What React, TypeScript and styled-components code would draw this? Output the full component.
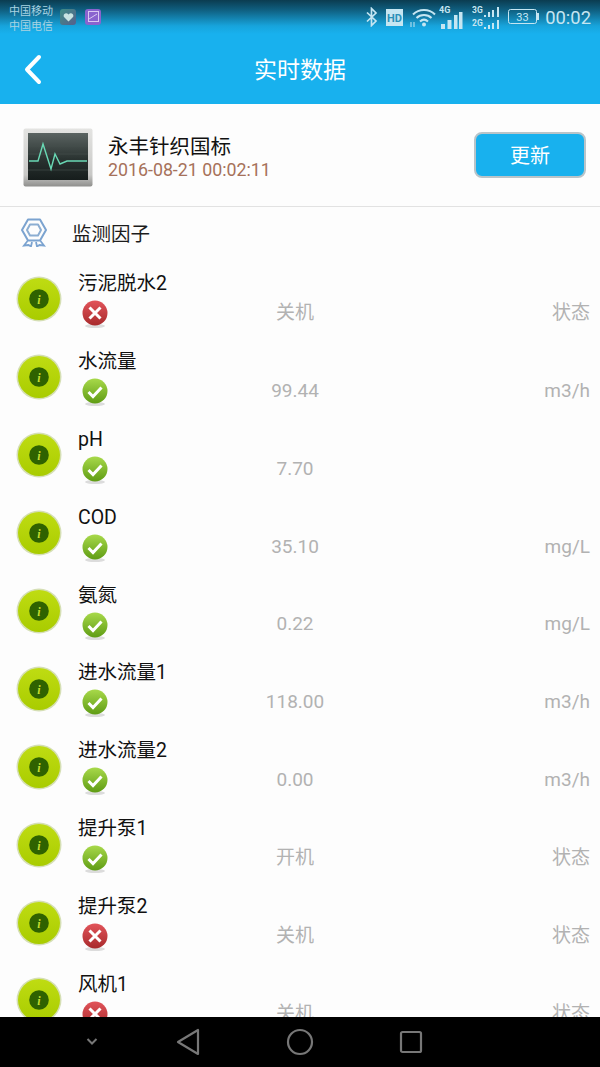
import React from "react";
import styled, { createGlobalStyle } from "styled-components";

const GlobalStyle = createGlobalStyle`
  html, body {
    margin: 0;
    padding: 0;
    background: #fdfdfd;
  }
  * { box-sizing: border-box; }
`;

const FONT = `"Roboto", "Noto Sans CJK SC", sans-serif`;

const Page = styled.div`
  width: 600px;
  height: 1067px;
  display: flex;
  flex-direction: column;
  overflow: hidden;
  background: #fdfdfd;
  font-family: ${FONT};
`;

const TopArea = styled.header`
  height: 104px;
  flex: none;
  background: linear-gradient(#0b3c50 0, #0f5f80 10px, #17a4dc 26px, #18b1ee 34px);
`;

const StatusBar = styled.div`
  height: 34px;
  display: flex;
  align-items: center;
  padding: 0 9px 0 9px;
`;

const Carriers = styled.div`
  width: 44px;
  font-size: 11px;
  line-height: 15px;
  color: #a9d3e2;
  margin-right: 7px;
  padding-top: 3px;
  white-space: nowrap;
`;

const AppBadge = styled.span<{ $bg: string }>`
  width: 16px;
  height: 16px;
  border-radius: 3px;
  background: ${(p) => p.$bg};
  margin-right: 9px;
  margin-top: -1px;
  display: flex;
  align-items: center;
  justify-content: center;
`;

const StatusIcons = styled.div`
  margin-left: auto;
  display: flex;
  align-items: center;
  color: #c6e6f2;
`;

const Clock = styled.span`
  font-size: 18.4px;
  margin-left: 6px;
  color: #c6e6f2;
`;

const NavRow = styled.div`
  height: 70px;
  display: flex;
  align-items: center;
  justify-content: center;
  position: relative;
`;

const BackBtn = styled.svg`
  position: absolute;
  left: 23px;
  top: 19px;
`;

const NavTitle = styled.div`
  font-size: 23px;
  color: #fff;
  margin-top: -3px;
`;

const StationBar = styled.section`
  height: 103px;
  flex: none;
  display: flex;
  align-items: center;
  padding: 0 14px 1px 23px;
  border-bottom: 1px solid #e2e2e2;
`;

const MonitorWrap = styled.div`
  margin-top: 7px;
  height: 60px;
`;

const StationText = styled.div`
  margin-left: 15px;
  margin-top: 3px;
  flex: 1;
`;

const StationName = styled.div`
  font-size: 20.5px;
  line-height: 26px;
  color: #111;
`;

const StationTime = styled.div`
  font-size: 17.8px;
  line-height: 19px;
  color: #a6715a;
`;

const UpdateButton = styled.button`
  width: 112px;
  height: 46px;
  border-radius: 8px;
  border: 2px solid #b9c4c9;
  background: #18b1ee;
  color: #fff;
  font-family: ${FONT};
  font-size: 20px;
  padding: 0;
`;

const SectionHead = styled.div`
  height: 54px;
  flex: none;
  display: flex;
  align-items: center;
  padding: 0 0 4px 21px;
  font-size: 19.5px;
  color: #1c1c1c;
`;

const SectionTitle = styled.span`
  margin-left: 25px;
`;

const List = styled.div`
  flex: 1;
  min-height: 0;
  overflow: hidden;
`;

const Row = styled.div`
  height: 77.9px;
  display: grid;
  grid-template-columns: 78px 142px 150px 1fr;
  align-items: end;
`;

const InfoCell = styled.div`
  align-self: center;
  padding-left: 16px;
  margin-top: -1px;
  display: flex;
`;

const NameCell = styled.div`
  align-self: stretch;
  padding-top: 9px;
`;

const Name = styled.div`
  font-size: 19.5px;
  line-height: 27px;
  color: #111;
`;

const StateIcon = styled.div`
  margin: 3px 0 0 3px;
  height: 28px;
`;

const Value = styled.div`
  text-align: center;
  font-size: 19px;
  line-height: 24px;
  color: #b2b2b2;
  padding-bottom: 14px;
`;

const Unit = styled.div`
  text-align: right;
  font-size: 19px;
  line-height: 24px;
  color: #b2b2b2;
  padding: 0 10px 14px 0;
`;

const BottomNav = styled.nav`
  height: 50px;
  flex: none;
  background: #000;
  display: grid;
  grid-template-columns: 96px 112px 111px 28px;
  align-items: center;
  padding-left: 78px;
`;

const NavKey = styled.div`
  width: 28px;
  display: flex;
  justify-content: center;
`;

const InfoBadge = () => (
  <svg width="46" height="46" viewBox="0 0 46 46">
    <defs>
      <linearGradient id="infoG" x1="0" y1="0" x2="0" y2="1">
        <stop offset="0" stopColor="#bfdc12" />
        <stop offset="1" stopColor="#a9cc00" />
      </linearGradient>
    </defs>
    <circle cx="23" cy="23" r="22.5" fill="#d5dfb4" />
    <circle cx="23" cy="23" r="21" fill="url(#infoG)" />
    <circle cx="23" cy="23" r="9.8" fill="#2f6200" />
    <text x="23" y="27.5" textAnchor="middle" fontSize="12" fontWeight="700" fontStyle="italic" fontFamily="Liberation Serif, serif" fill="#c4dc30">i</text>
  </svg>
);

const OkIcon = () => (
  <svg width="28" height="28" viewBox="0 0 28 28">
    <defs>
      <linearGradient id="okG" x1="0" y1="0" x2="0" y2="1">
        <stop offset="0" stopColor="#a8d94a" />
        <stop offset="1" stopColor="#5f9c14" />
      </linearGradient>
    </defs>
    <ellipse cx="14" cy="26" rx="10" ry="2" fill="#dcdcdc" />
    <circle cx="14" cy="13" r="12.5" fill="url(#okG)" />
    <path d="M7.5 14 L12 18.5 L20.5 9.5" fill="none" stroke="#fff" strokeWidth="3" />
  </svg>
);

const BadIcon = () => (
  <svg width="28" height="28" viewBox="0 0 28 28">
    <defs>
      <linearGradient id="badG" x1="0" y1="0" x2="0" y2="1">
        <stop offset="0" stopColor="#e2545a" />
        <stop offset="1" stopColor="#a82a2c" />
      </linearGradient>
    </defs>
    <ellipse cx="14" cy="26" rx="10" ry="2" fill="#dcdcdc" />
    <circle cx="14" cy="13" r="12.5" fill="url(#badG)" />
    <path d="M8.5 7.5 L19.5 18.5 M19.5 7.5 L8.5 18.5" stroke="#fff" strokeWidth="3" />
  </svg>
);

const Monitor = () => (
  <svg width="70" height="60" viewBox="0 0 70 60">
    <defs>
      <linearGradient id="caseG" x1="0" y1="0" x2="0" y2="1">
        <stop offset="0" stopColor="#e4e4e2" />
        <stop offset="0.8" stopColor="#c8c8c6" />
        <stop offset="1" stopColor="#8f8f8d" />
      </linearGradient>
      <linearGradient id="screenG" x1="0" y1="0" x2="0" y2="1">
        <stop offset="0" stopColor="#5b6462" />
        <stop offset="0.55" stopColor="#2a3331" />
        <stop offset="1" stopColor="#161d1c" />
      </linearGradient>
    </defs>
    <rect x="0.5" y="0.5" width="69" height="58" rx="2" fill="url(#caseG)" />
    <rect x="5" y="5" width="60" height="47" fill="url(#screenG)" />
    <path d="M5 18H65M5 26H65M5 42H65" stroke="#46524f" strokeWidth="0.6" />
    <path d="M6 33 H15 L20 16 L28 41 L32 26 L37 36 L44 33 H64" fill="none" stroke="#69d8b4" strokeWidth="1.4" />
  </svg>
);

const Ribbon = () => (
  <svg width="26" height="30" viewBox="0 0 26 30">
    <path d="M7 2.5H19L25 13L19 23.5H7L1 13Z" fill="none" stroke="#7ba3d0" strokeWidth="2" strokeLinejoin="round" />
    <path d="M9 7.5H17L20 13L17 18.5H9L6 13Z" fill="none" stroke="#8caed2" strokeWidth="2" strokeLinejoin="round" />
    <path d="M6.5 24L3 28.5L7.5 28L10 29.5L11 25M19.5 24L23 28.5L18.5 28L16 29.5L15 25" fill="none" stroke="#7ba3d0" strokeWidth="1.8" />
  </svg>
);

const StatusGlyphs = () => (
  <>
    {/* bluetooth */}
    <svg width="14" height="20" viewBox="0 0 14 20" style={{ marginRight: 7 }}>
      <path d="M2 5.5L11 14L6.5 18.5V1.5L11 6L2 14.5" fill="none" stroke="#c6e6f2" strokeWidth="1.7" />
    </svg>
    {/* HD */}
    <svg width="17" height="17" viewBox="0 0 17 17" style={{ marginRight: 7 }}>
      <rect width="17" height="17" fill="#c6e6f2" />
      <text x="8.5" y="13" textAnchor="middle" fontSize="11" fontWeight="700" fontFamily="Roboto, sans-serif" fill="#2a90b8">HD</text>
    </svg>
    {/* wifi */}
    <svg width="26" height="20" viewBox="0 0 26 20" style={{ marginRight: 3 }}>
      <path d="M3 7.5C9 1.5 19 1.5 25 7.5M6.5 11C10.5 7 17.5 7 21.5 11M10 14.5C12.5 12.2 15.5 12.2 18 14.5" fill="none" stroke="#c6e6f2" strokeWidth="2" />
      <circle cx="14" cy="17.5" r="2" fill="#c6e6f2" />
      <path d="M1 15v5M4 15v5" stroke="#c6e6f2" strokeWidth="1" />
    </svg>
    {/* 4G */}
    <svg width="24" height="26" viewBox="0 0 24 26" style={{ marginRight: 9 }}>
      <text x="0" y="9" fontSize="9" fontWeight="700" fontFamily="Roboto, sans-serif" fill="#c6e6f2">4G</text>
      <path d="M2 20h4v5H2zM8.5 16h4v9h-4zM15 11h3.5v14H15zM20 8h3.5v17H20z" fill="#c6e6f2" />
    </svg>
    {/* 3G 2G */}
    <svg width="28" height="26" viewBox="0 0 28 26" style={{ marginRight: 8 }}>
      <text x="0" y="9" fontSize="8.5" fontWeight="700" fontFamily="Roboto, sans-serif" fill="#c6e6f2">3G</text>
      <text x="0" y="22" fontSize="8.5" fontWeight="700" fontFamily="Roboto, sans-serif" fill="#c6e6f2">2G</text>
      <path d="M12 11h2v2h-2zM16 8h2v5h-2zM20 6h2v7h-2zM25 3h2v10h-2zM12 23h2v2h-2zM16 21h2v4h-2zM20 19h2v6h-2zM25 16h2v9h-2z" fill="#c6e6f2" />
    </svg>
    {/* battery */}
    <svg width="31" height="16" viewBox="0 0 31 16">
      <rect x="0.5" y="0.5" width="28" height="14" rx="2" fill="none" stroke="#c6e6f2" />
      <rect x="29" y="4" width="2" height="7" fill="#c6e6f2" />
      <text x="14.5" y="12" textAnchor="middle" fontSize="11" fontFamily="Roboto, sans-serif" fill="#c6e6f2">33</text>
    </svg>
  </>
);

type Item = { name: string; ok: boolean; value: string; unit: string };

const items: Item[] = [
  { name: "污泥脱水2", ok: false, value: "关机", unit: "状态" },
  { name: "水流量", ok: true, value: "99.44", unit: "m3/h" },
  { name: "pH", ok: true, value: "7.70", unit: "" },
  { name: "COD", ok: true, value: "35.10", unit: "mg/L" },
  { name: "氨氮", ok: true, value: "0.22", unit: "mg/L" },
  { name: "进水流量1", ok: true, value: "118.00", unit: "m3/h" },
  { name: "进水流量2", ok: true, value: "0.00", unit: "m3/h" },
  { name: "提升泵1", ok: true, value: "开机", unit: "状态" },
  { name: "提升泵2", ok: false, value: "关机", unit: "状态" },
  { name: "风机1", ok: false, value: "关机", unit: "状态" },
];

export default function App() {
  return (
    <Page>
      <GlobalStyle />
      <TopArea>
        <StatusBar>
          <Carriers>
            中国移动
            <br />
            中国电信
          </Carriers>
          <AppBadge $bg="linear-gradient(135deg, #3e8e86, #56608e)">
            <svg width="11" height="10" viewBox="0 0 11 10">
              <path d="M5.5 9.5L1 5C-0.5 2.5 3 -0.5 5.5 2.5C8 -0.5 11.5 2.5 10 5Z" fill="#c9e4e2" />
            </svg>
          </AppBadge>
          <AppBadge $bg="#8a63cf">
            <svg width="11" height="11" viewBox="0 0 11 11">
              <rect x="0.5" y="0.5" width="10" height="10" fill="none" stroke="#d9c9f2" />
              <path d="M1 8L9 3" stroke="#d9c9f2" />
            </svg>
          </AppBadge>
          <StatusIcons>
            <StatusGlyphs />
            <Clock>00:02</Clock>
          </StatusIcons>
        </StatusBar>
        <NavRow>
          <BackBtn width="20" height="32" viewBox="0 0 20 32">
            <path d="M16 4L4 16.5L16 29" fill="none" stroke="#fff" strokeWidth="4" strokeLinecap="round" strokeLinejoin="round" />
          </BackBtn>
          <NavTitle>实时数据</NavTitle>
        </NavRow>
      </TopArea>
      <StationBar>
        <MonitorWrap>
          <Monitor />
        </MonitorWrap>
        <StationText>
          <StationName>永丰针织国标</StationName>
          <StationTime>2016-08-21 00:02:11</StationTime>
        </StationText>
        <UpdateButton>更新</UpdateButton>
      </StationBar>
      <SectionHead>
        <Ribbon />
        <SectionTitle>监测因子</SectionTitle>
      </SectionHead>
      <List>
        {items.map((it) => (
          <Row key={it.name}>
            <InfoCell>
              <InfoBadge />
            </InfoCell>
            <NameCell>
              <Name>{it.name}</Name>
              <StateIcon>{it.ok ? <OkIcon /> : <BadIcon />}</StateIcon>
            </NameCell>
            <Value>{it.value}</Value>
            <Unit>{it.unit}</Unit>
          </Row>
        ))}
      </List>
      <BottomNav>
        <NavKey>
          <svg width="14" height="10" viewBox="0 0 14 10">
            <path d="M2.5 2L7 6.5L11.5 2" fill="none" stroke="#777" strokeWidth="2" />
          </svg>
        </NavKey>
        <NavKey>
          <svg width="24" height="28" viewBox="0 0 24 28">
            <path d="M22 2V26L2 14Z" fill="none" stroke="#777" strokeWidth="2.2" strokeLinejoin="round" />
          </svg>
        </NavKey>
        <NavKey>
          <svg width="28" height="28" viewBox="0 0 28 28">
            <circle cx="14" cy="14" r="12" fill="none" stroke="#777" strokeWidth="2.2" />
          </svg>
        </NavKey>
        <NavKey>
          <svg width="24" height="24" viewBox="0 0 24 24">
            <rect x="2" y="2" width="20" height="20" rx="1.5" fill="none" stroke="#777" strokeWidth="2.2" />
          </svg>
        </NavKey>
      </BottomNav>
    </Page>
  );
}
